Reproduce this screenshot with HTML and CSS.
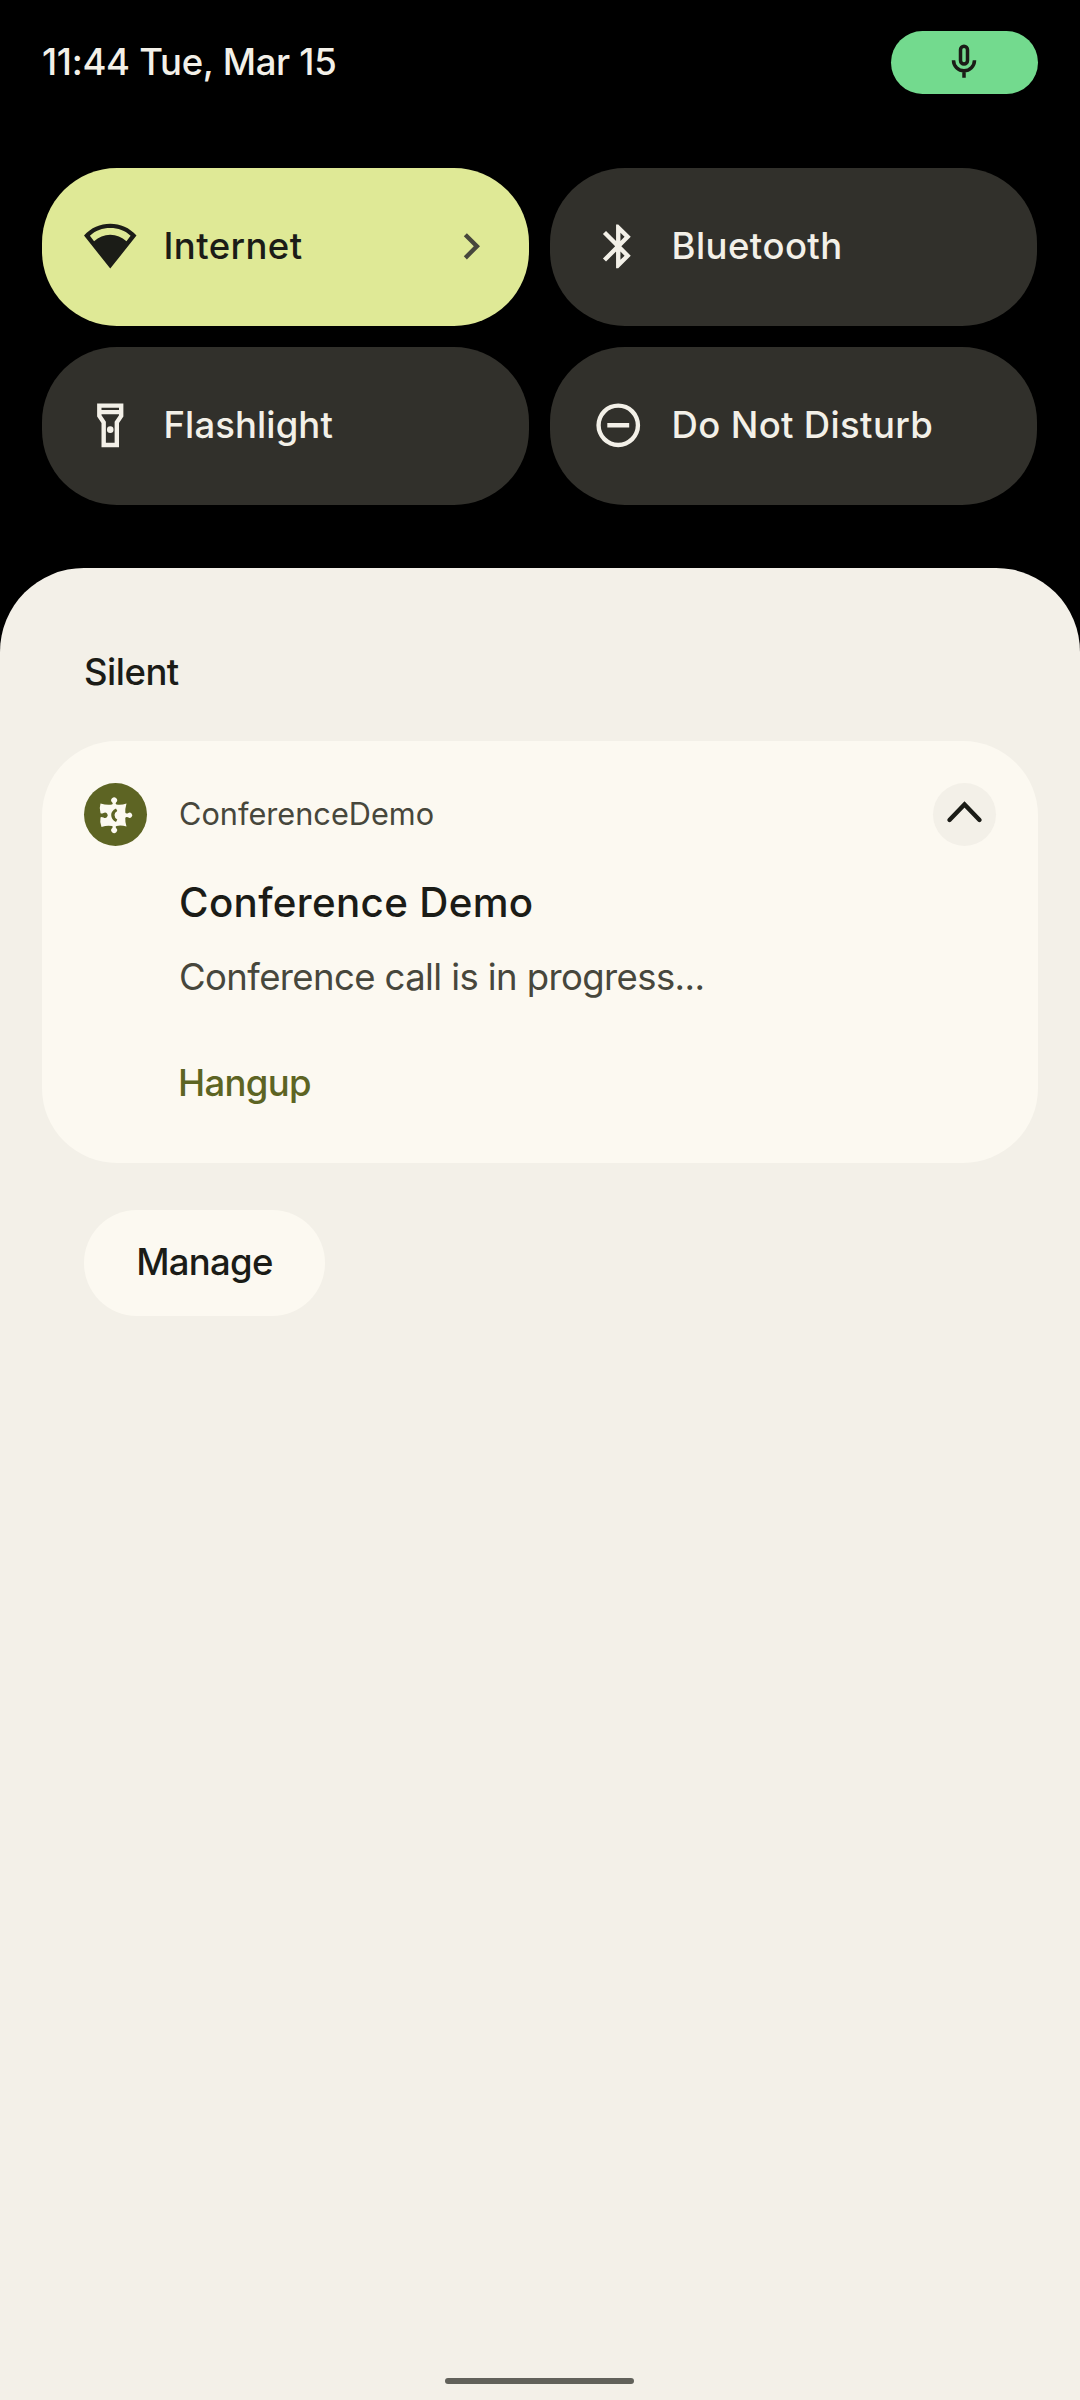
FILE: index.html
```html
<!DOCTYPE html>
<html lang="en">
<head>
<meta charset="utf-8">
<title>Notification shade</title>
<link rel="stylesheet" href="styles.css">
</head>
<body>
<div class="shade">
  <header class="status">
    <span class="clock">11:44 Tue, Mar 15</span>
    <span class="privacy-chip">
      <svg class="mic" viewBox="0 0 24 24"><rect x="10" y="3" width="4" height="10.2" rx="2"/><path d="M6 11a6 6 0 0 0 12 0M12 17v4"/></svg>
    </span>
  </header>
  <section class="tiles">
    <div class="tile active">
      <svg class="icon" viewBox="0 0 24 24"><path fill-rule="evenodd" d="M12 1.700C7.400 1.700 3.200 3.500 0 7.100L12 22.200 24 7.100C20.800 3.500 16.600 1.700 12 1.700zM12 3.700c3.600 0 6.800 1.200 9.300 3.500l-1.900 2.500C17.300 7.700 14.800 6.700 12 6.700s-5.300 1-7.400 3L2.700 7.200C5.200 4.900 8.400 3.700 12 3.700z"/></svg>
      <span class="label internet">Internet</span>
      <svg class="icon next" viewBox="0 0 24 24"><path d="M10 6L8.590 7.410 13.170 12l-4.580 4.590L10 18l6-6z"/></svg>
    </div>
    <div class="tile">
      <svg class="icon" viewBox="0 0 24 24"><path fill-rule="evenodd" d="M17.710 7.710L12 2h-1v7.590L6.410 5 5 6.410 10.590 12 5 17.590 6.410 19 11 14.410V22h1l5.710-5.710L13.410 12zM13 5.830l1.880 1.880L13 9.590zM14.880 16.290L13 18.170v-3.760z"/></svg>
      <span class="label bluetooth">Bluetooth</span>
    </div>
    <div class="tile">
      <svg class="icon" viewBox="0 0 24 24"><path fill-rule="evenodd" d="M18 2H6v6l2 3v11h8V11l2-3zM16 4v1H8V4zM14 10.400V20h-4v-9.600L8 7.400V7h8v.4z"/><circle cx="12" cy="14" r="1.500"/></svg>
      <span class="label flashlight">Flashlight</span>
    </div>
    <div class="tile">
      <svg class="icon" viewBox="0 0 24 24"><path fill-rule="evenodd" d="M12 2a10 10 0 1 0 0 20 10 10 0 0 0 0-20zM12 4a8 8 0 1 1 0 16 8 8 0 0 1 0-16zM7 11h10v2H7z"/></svg>
      <span class="label dnd">Do Not Disturb</span>
    </div>
  </section>
  <main class="panel">
    <h2 class="section-title">Silent</h2>
    <article class="card">
      <span class="app-icon">
        <svg viewBox="0 0 63 63"><path class="piece" fill-rule="evenodd" d="M16.500 20.500Q23 22.500 28 21.500Q29.500 21 28.300 19.500A2.900 2.900 0 1 1 32 19.500Q31 21 32.500 21.500Q37 22.500 42.500 20.500Q41 26 41.300 29.500Q41.800 31 44 30.300A2.600 2.600 0 1 1 44 34.300Q41.800 33.500 41.300 35Q41 39 42.500 43.500Q37 42 32.500 43Q31 43.500 32 45A2.900 2.900 0 1 1 28.300 45Q29.500 43.500 28 43Q23 42 17.500 44Q15.500 39 16.500 34.500Q17 33.500 19.500 34.500A2.700 2.700 0 1 0 19.500 30Q17 31 16.500 30Q15 25 16.500 20.500zM32 25.500Q27 28 27.200 32Q27.200 36.500 32 39L33.300 36.500Q30.500 35 30.500 32Q30.500 29.500 33.300 28z"/></svg>
      </span>
      <div class="content">
        <div class="app-name">ConferenceDemo</div>
        <h3 class="title">Conference Demo</h3>
        <p class="message">Conference call is in progress...</p>
        <div class="action">Hangup</div>
      </div>
      <span class="collapse"><svg viewBox="0 0 63 63"><path d="M16.500 37L31.500 21.500 46.500 37"/></svg></span>
    </article>
    <div class="manage"><span>Manage</span></div>
    <div class="home-bar"></div>
  </main>
</div>
</body>
</html>
```
FILE: styles.css
```css
* { box-sizing: border-box; }
body {
  margin: 0;
  background: #000;
  color: #1b1c17;
  font-family: Inter, Roboto, sans-serif;
  font-weight: 500;
}
h2, h3, p { margin: 0; font-weight: inherit; }
svg { display: block; }

.shade {
  width: 1080px;
  height: 2400px;
  display: flex;
  flex-direction: column;
}

.status {
  height: 168px;
  padding: 31px 42px 0 42px;
  display: flex;
  justify-content: space-between;
  align-items: flex-start;
}
.clock {
  color: #f3f0e8;
  font-size: 36.500px;
  line-height: 63px;
  letter-spacing: -0.300px;
}
.privacy-chip {
  width: 147px;
  height: 63px;
  padding-right: 1px;
  border-radius: 32px;
  background: #73da8e;
  display: flex;
  justify-content: center;
  align-items: center;
}
.mic {
  width: 42px;
  height: 42px;
  margin-bottom: 2px;
  fill: none;
  stroke: #1b1c17;
  stroke-width: 2;
}

.tiles {
  height: 400px;
  padding: 0 43px 0 42px;
  display: grid;
  grid-template-columns: 487px 487px;
  grid-template-rows: 158px 158px;
  gap: 21px;
}
.tile {
  padding: 0 32px 1px 42px;
  border-radius: 75px;
  background: #31302b;
  color: #f3f0e8;
  display: flex;
  align-items: center;
}
.tile.active { background: #dfe996; color: #1b1c17; }
.icon { width: 52.500px; height: 52.500px; fill: currentColor; flex: none; }
.next { margin-left: auto; fill: #47473c; }
.label {
  margin-left: 27px;
  font-size: 36.500px;
  line-height: 44px;
  padding-bottom: 1px;
}
.internet { letter-spacing: 0.400px; }
.bluetooth { letter-spacing: 0.450px; }
.flashlight { letter-spacing: 0.100px; }
.dnd { letter-spacing: 0.350px; }

.panel {
  flex: 1;
  padding: 78px 42px 16px;
  border-radius: 84px 84px 0 0;
  background: #f3f0e8;
  display: flex;
  flex-direction: column;
}
.section-title {
  height: 95px;
  padding-left: 42px;
  font-size: 36.500px;
  line-height: 52px;
  letter-spacing: -0.500px;
}
.card {
  height: 422px;
  padding: 42px;
  border-radius: 75px;
  background: #fcf9f1;
  display: flex;
  align-items: flex-start;
}
.app-icon, .collapse { width: 63px; height: 63px; border-radius: 50%; flex: none; }
.app-icon { background: #5d6423; }
.piece { fill: #fcf9f1; }
.content { flex: 1; padding-left: 32px; white-space: nowrap; }
.app-name {
  color: #47473c;
  font-size: 30.700px;
  font-weight: 400;
  line-height: 61px;
}
.title {
  margin-top: 28px;
  font-size: 40.300px;
  line-height: 62px;
  letter-spacing: 0.350px;
}
.message {
  margin-top: 18px;
  color: #47473c;
  font-size: 36.500px;
  font-weight: 400;
  line-height: 50px;
  letter-spacing: -0.600px;
}
.action {
  margin-top: 55px;
  margin-left: -1px;
  color: #5d6423;
  font-size: 36.500px;
  line-height: 52px;
  letter-spacing: -0.700px;
}
.collapse { background: #f3f0e8; }
.collapse path {
  fill: none;
  stroke: #1b1c17;
  stroke-width: 4.400;
  stroke-linecap: round;
}
.manage {
  width: 241px;
  height: 106px;
  margin: 47px 0 0 42px;
  padding-bottom: 2px;
  border-radius: 53px;
  background: #fcf9f1;
  font-size: 36.500px;
  letter-spacing: -0.700px;
  display: flex;
  align-items: center;
  justify-content: center;
}
.home-bar {
  width: 189px;
  height: 6px;
  margin: auto 0 0 403px;
  border-radius: 3px;
  background: #61615a;
}
```
